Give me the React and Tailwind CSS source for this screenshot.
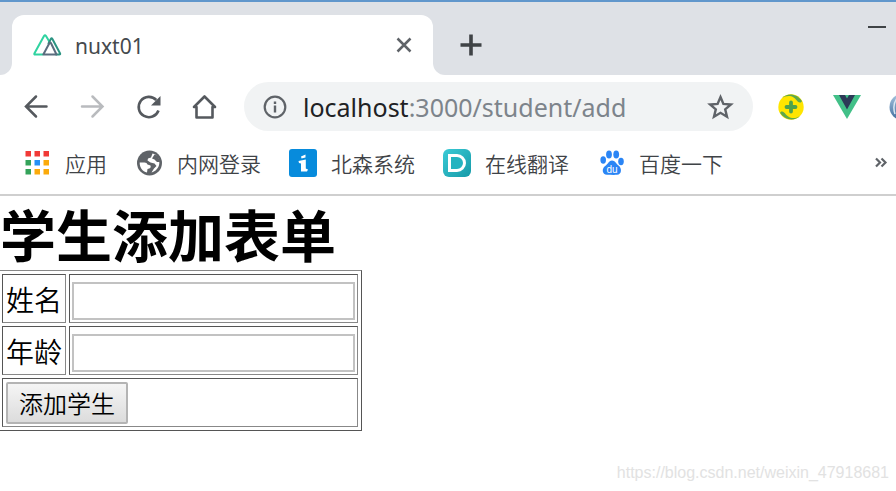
import React from "react";

const cjk = "font-['Noto_Sans_CJK_SC',sans-serif]";

function NuxtLogo() {
  return (
    <svg width="30" height="24" viewBox="0 0 30 24" fill="none" strokeWidth="2" strokeLinejoin="round" strokeLinecap="round" aria-hidden="true">
      <path d="M10.500 21.500H3.200Q1.800 21.500 2.500 20.200L12 3Q13 1.500 14 3L17.300 8.600" stroke="#2fd3a0" />
      <path d="M16.500 10.500L18.800 6Q19.600 4.700 20.400 6L28 20.200Q28.700 21.500 27.200 21.500H24" stroke="#2b9482" />
      <path d="M11.300 21.500L17.500 10Q18.200 9 18.900 10L24.500 21.500Z" stroke="#5a6c7e" />
    </svg>
  );
}

function BackIcon() {
  return (
    <svg width="28" height="28" viewBox="0 0 28 28" fill="none" stroke="currentColor" strokeWidth="2.500" strokeLinecap="round" aria-hidden="true">
      <path d="M24.500 13.500H4.500M14 3.500L4 13.500L14 23.500" />
    </svg>
  );
}

function ForwardIcon() {
  return (
    <svg width="28" height="28" viewBox="0 0 28 28" fill="none" stroke="currentColor" strokeWidth="2.500" strokeLinecap="round" aria-hidden="true">
      <path d="M4 13.500H24M14.500 3.500L24.500 13.500L14.500 23.500" />
    </svg>
  );
}

function ReloadIcon() {
  return (
    <svg width="28" height="28" viewBox="0 0 28 28" fill="none" aria-hidden="true">
      <path d="M24.500 17.500A10.200 10.200 0 1 1 22.300 7" stroke="currentColor" strokeWidth="2.600" />
      <path d="M26.500 3V12.500H17Z" fill="currentColor" />
    </svg>
  );
}

function HomeIcon() {
  return (
    <svg width="28" height="28" viewBox="0 0 28 28" fill="none" stroke="currentColor" strokeWidth="2.600" strokeLinejoin="round" aria-hidden="true">
      <path d="M4 14L14.500 3.500L25 14H22.500V24.500H6.500V14Z" />
    </svg>
  );
}

function InfoIcon() {
  return (
    <svg width="24" height="24" viewBox="0 0 24 24" fill="none" aria-hidden="true">
      <circle cx="12" cy="12" r="10.300" stroke="currentColor" strokeWidth="2.200" />
      <path d="M12 10.500V17.500M12 6.500V9" stroke="currentColor" strokeWidth="2.400" />
    </svg>
  );
}

function StarIcon() {
  return (
    <svg width="32" height="32" viewBox="0 0 32 32" fill="none" stroke="currentColor" strokeWidth="2.400" aria-hidden="true">
      <path d="M15.500 6L18.400 12.900L25.900 13.500L20.200 18.400L22 25.700L15.500 21.800L9 25.700L10.800 18.400L5.100 13.500L12.600 12.900Z" />
    </svg>
  );
}

function SafeIcon() {
  return (
    <svg width="28" height="28" viewBox="0 0 28 28" aria-hidden="true">
      <circle cx="14" cy="14" r="12.700" fill="#ffe500" />
      <path d="M5 5C10 -0.200 20 0.200 25 8.200L23.800 9.500C20 10.500 19.500 4.200 13 3C10 2.600 7 3.600 5 5Z" fill="#5fa84a" />
      <path d="M23 23C18 28.200 8 27.800 3 19.800L4.200 18.500C8 17.500 8.500 23.800 15 25C18 25.400 21 24.400 23 23Z" fill="#5fa84a" />
      <path d="M14 9.500V18.500M9.500 14H18.500" stroke="#4ea24c" strokeWidth="3.800" strokeLinecap="round" />
    </svg>
  );
}

function VueIcon() {
  return (
    <svg width="28" height="28" viewBox="0 0 28 28" aria-hidden="true">
      <path d="M0 2H28L14 26Z" fill="#42c088" />
      <path d="M6 2H12L14 5.500L16 2H22L14 16.500Z" fill="#2c3a57" />
    </svg>
  );
}

function EarthIcon() {
  return (
    <svg width="28" height="28" viewBox="0 0 28 28" aria-hidden="true">
      <defs>
        <linearGradient id="earth" x1="0" y1="0" x2="0" y2="1">
          <stop offset="0" stopColor="#a9c6e0" />
          <stop offset="1" stopColor="#3f6c9c" />
        </linearGradient>
      </defs>
      <circle cx="14" cy="14" r="13.500" fill="url(#earth)" />
      <path d="M8 5Q3 12 6 21" stroke="#dbe8f3" strokeWidth="1.500" fill="none" />
    </svg>
  );
}

const appDots = [
  "#f13a37", "#f13a37", "#f13a37",
  "#34a35a", "#2490f5", "#fbaa0a",
  "#34a35a", "#fbaa0a", "#fbaa0a",
];

function AppsIcon() {
  return (
    <svg width="28" height="28" viewBox="0 0 28 28" aria-hidden="true">
      {appDots.map((fill, i) => (
        <rect key={i} x={2.5 + (i % 3) * 9} y={2 + Math.floor(i / 3) * 9} width="5.500" height="5.500" fill={fill} />
      ))}
    </svg>
  );
}

function GlobeIcon() {
  return (
    <svg width="28" height="28" viewBox="0 0 28 28" aria-hidden="true">
      <circle cx="14.500" cy="14" r="12.500" fill="#5f6368" />
      <path d="M4.700 13.500H9.500Q12 13.500 12.500 15.500L15.500 16.500Q16.500 19.500 12.500 20L12 23.500C7.500 22.500 4.500 18.500 4.700 13.500Z" fill="#fff" />
      <path d="M17.500 4.500C22 5.500 24.800 10 24.300 14.500C23.800 19 20.500 22.500 16.500 23.600L19 19.500L21.500 17L19.500 14.500L15.500 13.500L12.500 11.500L13 9.500L16 8.500Z" fill="#fff" />
      <path d="M19.500 5.500L17 9.500L19.500 10.500L22 13L25 13L23 7Z" fill="#5f6368" />
    </svg>
  );
}

function BeisenIcon() {
  return (
    <svg width="28" height="28" viewBox="0 0 28 28" aria-hidden="true">
      <rect width="28" height="28" rx="3" fill="#078bdc" />
      <path d="M12 7.500L16.500 5.500V8.500L12.500 9.500Z" fill="#fff" />
      <path d="M9.500 12L16.800 10.500V19.500L19 20.500L18 22.500H12V14.500L10 14Z" fill="#fff" />
    </svg>
  );
}

function TranslateIcon() {
  return (
    <span className="flex size-7 items-center justify-center rounded-md bg-linear-to-br from-[#3acbd6] to-[#149aa8]">
      <span className="h-[18px] w-[18px] rounded-l-xs rounded-r-full border-3 border-white bg-[#24b3c0]" />
    </span>
  );
}

function BaiduIcon() {
  return (
    <svg width="28" height="28" viewBox="0 0 28 28" fill="#2a85f5" aria-hidden="true">
      <ellipse cx="6.200" cy="11" rx="2.800" ry="3.700" />
      <ellipse cx="12" cy="5.500" rx="2.900" ry="3.900" />
      <ellipse cx="19.200" cy="5.500" rx="2.900" ry="3.900" />
      <ellipse cx="24" cy="12.500" rx="2.800" ry="3.700" />
      <path d="M15 11.500C18 11.500 19 14.500 21.500 16.500C25 19 25 25.500 20 25.800C17 26 13 25.800 10 25.800C5 25.500 4.500 19.500 8.200 17C11 15 12 11.500 15 11.500Z" />
      <text x="15" y="23.500" textAnchor="middle" fill="#fff" fontSize="10" fontFamily="Liberation Sans, sans-serif">du</text>
    </svg>
  );
}

const bookmarks = [
  { label: "应用", Icon: AppsIcon },
  { label: "内网登录", Icon: GlobeIcon },
  { label: "北森系统", Icon: BeisenIcon },
  { label: "在线翻译", Icon: TranslateIcon },
  { label: "百度一下", Icon: BaiduIcon },
];

function TabStrip() {
  return (
    <div className="border-t-2 border-[#6197cc] bg-[#dee1e6] pt-[13px]">
      <div className="flex h-[60px] bg-white">
        <div className="w-3 shrink-0 rounded-br-xl bg-[#dee1e6]" />
        <div className="w-[421px] bg-[#dee1e6]">
          <div className="flex h-full items-center rounded-t-xl bg-white pr-5 pl-5">
            <NuxtLogo />
            <span className="ml-[13px] flex-1 pt-0.5 font-['Noto_Sans',sans-serif] text-[21px] leading-7 text-[#45494d]">nuxt01</span>
            <button type="button" aria-label="Close tab" className="text-[#5f6368]">
              <svg width="18" height="18" viewBox="0 0 18 18" stroke="currentColor" strokeWidth="2.500" aria-hidden="true">
                <path d="M2.500 2.500L15.500 15.500M15.500 2.500L2.500 15.500" />
              </svg>
            </button>
          </div>
        </div>
        <div className="flex flex-1 items-center justify-between rounded-bl-xl bg-[#dee1e6] pr-2.5 pl-[27px]">
          <button type="button" aria-label="New tab" className="text-[#3f4346]">
            <svg width="22" height="22" viewBox="0 0 22 22" stroke="currentColor" strokeWidth="3.600" aria-hidden="true">
              <path d="M11 0.500V21.500M0.500 11H21.500" />
            </svg>
          </button>
          <button type="button" aria-label="Minimize" className="mb-9 text-[#3f4346]">
            <svg width="18" height="4" viewBox="0 0 18 4" className="block" aria-hidden="true">
              <path d="M0 2H18" stroke="currentColor" strokeWidth="2" />
            </svg>
          </button>
        </div>
      </div>
    </div>
  );
}

function Toolbar() {
  return (
    <div className="flex items-center overflow-hidden pt-[7px] pl-[22px]">
      <div className="flex shrink-0 gap-7 text-[#55595e]">
        <button type="button" aria-label="Back"><BackIcon /></button>
        <button type="button" aria-label="Forward" className="text-[#b9bbbe]"><ForwardIcon /></button>
        <button type="button" aria-label="Reload"><ReloadIcon /></button>
        <button type="button" aria-label="Home"><HomeIcon /></button>
      </div>
      <div className="ml-[26px] flex h-[49px] min-w-0 flex-1 items-center rounded-full bg-[#f1f3f4] pr-4 pl-[19px] text-[#5f6368]">
        <button type="button" aria-label="Site information"><InfoIcon /></button>
        <div role="textbox" aria-label="Address" className="ml-4 min-w-0 flex-1 truncate font-['Noto_Sans',sans-serif] text-[25px] leading-[40px] text-[#7d848b]">
          <span className="text-[#202124]">localhost</span>:3000/student/add
        </div>
        <button type="button" aria-label="Bookmark this page"><StarIcon /></button>
      </div>
      <div className="-mr-[21px] ml-6 flex shrink-0 gap-7">
        <button type="button" aria-label="Safety extension"><SafeIcon /></button>
        <button type="button" aria-label="Vue devtools"><VueIcon /></button>
        <button type="button" aria-label="Network extension"><EarthIcon /></button>
      </div>
    </div>
  );
}

function BookmarksBar() {
  return (
    <nav className="flex h-[65px] items-center border-b-2 border-[#cfcfcf] pr-2 pl-[23px]">
      <div className="flex flex-1 gap-7">
        {bookmarks.map(({ label, Icon }) => (
          <a key={label} href="#" className="flex shrink-0 items-center gap-3.5">
            <Icon />
            <span className={`${cjk} text-[21px] leading-7 font-[350] text-[#3f4347]`}>{label}</span>
          </a>
        ))}
      </div>
      <button type="button" aria-label="More bookmarks" className="text-[#5f6368]">
        <svg width="14" height="14" viewBox="0 0 14 14" fill="none" stroke="currentColor" strokeWidth="2.200" aria-hidden="true">
          <path d="M2 2.500L6 6.500L2 10.500M7.500 2.500L11.500 6.500L7.500 10.500" />
        </svg>
      </button>
    </nav>
  );
}

const cell = "h-[49px] border border-t-[#555] border-l-[#555] border-r-[#888] border-b-[#888] py-0.5";
const field = "mt-[5px] block h-[38px] w-[283px] border-2 border-[#c2c2c2] bg-white px-1 text-2xl outline-none";

function StudentForm() {
  return (
    <main className={`${cjk} text-black`}>
      <h1 className="text-[56px] leading-[74px] font-bold">学生添加表单</h1>
      <form onSubmit={(e) => e.preventDefault()}>
        <table className="-ml-0.5 border-separate border-spacing-[3px] border border-t-[#888] border-r-[#555] border-b-[#555] border-l-[#888] text-[28px] leading-[36px] font-[350]">
          <tbody>
            <tr>
              <td className={`${cell} px-[3px]`}><label htmlFor="name">姓名</label></td>
              <td className={`${cell} px-0.5`}><input id="name" type="text" className={field} /></td>
            </tr>
            <tr>
              <td className={`${cell} px-[3px]`}><label htmlFor="age">年龄</label></td>
              <td className={`${cell} px-0.5`}><input id="age" type="text" className={field} /></td>
            </tr>
            <tr>
              <td className={`${cell} px-[3px]`} colSpan={2}>
                <button type="submit" className="block h-[42px] rounded-xs border-2 border-[#b4b4b4] bg-linear-to-b from-[#f5f5f5] to-[#dcdcdc] px-[11px] text-2xl leading-9">
                  添加学生
                </button>
              </td>
            </tr>
          </tbody>
        </table>
      </form>
    </main>
  );
}

export default function App() {
  return (
    <div className="relative min-h-screen overflow-hidden bg-white">
      <header>
        <TabStrip />
        <Toolbar />
        <BookmarksBar />
      </header>
      <StudentForm />
      <p className="absolute right-[7px] bottom-1.5 font-['Liberation_Sans',sans-serif] text-base text-[#e2e2e2]">
        https://blog.csdn.net/weixin_47918681
      </p>
    </div>
  );
}
